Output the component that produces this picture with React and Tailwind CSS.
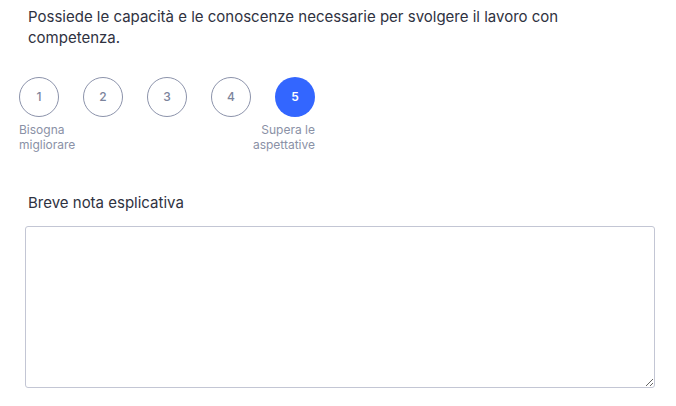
import React, { useState } from 'react';

const labels = { 1: ['Bisogna', 'migliorare'], 5: ['Supera le', 'aspettative'] };

export default function App() {
  const [value, setValue] = useState(5);
  const [note, setNote] = useState('');

  return (
    <div className="min-h-screen bg-white font-['Inter',sans-serif] text-[#2e3140]">
      {/* Domanda */}
      <p className="pl-[28px] pr-6 pt-[6px] text-[15px] leading-[21px] text-[#2f3241]">
        Possiede le capacità e le conoscenze necessarie per svolgere il lavoro con competenza.
      </p>

      {/* Scala di valutazione */}
      <div className="mt-[29px] pl-[19px] flex gap-6">
        {[1, 2, 3, 4, 5].map((n) => (
          <div key={n} className="relative flex flex-col items-center w-10">
            <button
              onClick={() => setValue(n)}
              className={
                n === value
                  ? 'w-10 h-10 rounded-full bg-[#3366ff] text-white text-[12px] font-semibold flex items-center justify-center'
                  : 'w-10 h-10 rounded-full border border-[#8c93ab] text-[#7c849c] text-[12px] font-medium flex items-center justify-center'
              }
            >
              {n}
            </button>
            {labels[n] && (
              <div
                className={
                  n === 1
                    ? 'absolute top-[45px] left-0 whitespace-nowrap text-[12px] leading-[15px] text-[#8a91a6]'
                    : 'absolute top-[45px] right-0 whitespace-nowrap text-right text-[12px] leading-[15px] text-[#8a91a6]'
                }
              >
                <div>{labels[n][0]}</div>
                <div>{labels[n][1]}</div>
              </div>
            )}
          </div>
        ))}
      </div>

      {/* Nota */}
      <div className="mt-[75px] pl-[28px] text-[15px] leading-[21px] text-[#2f3241]">Breve nota esplicativa</div>
      <div className="mt-[13px] pl-[25px] pr-[21px]">
        <textarea
          value={note}
          onChange={(e) => setNote(e.target.value)}
          className="block w-full h-[162px] rounded-[3px] border border-[#c3c6d4] bg-white p-3 text-[14px] outline-none"
        />
      </div>
    </div>
  );
}
